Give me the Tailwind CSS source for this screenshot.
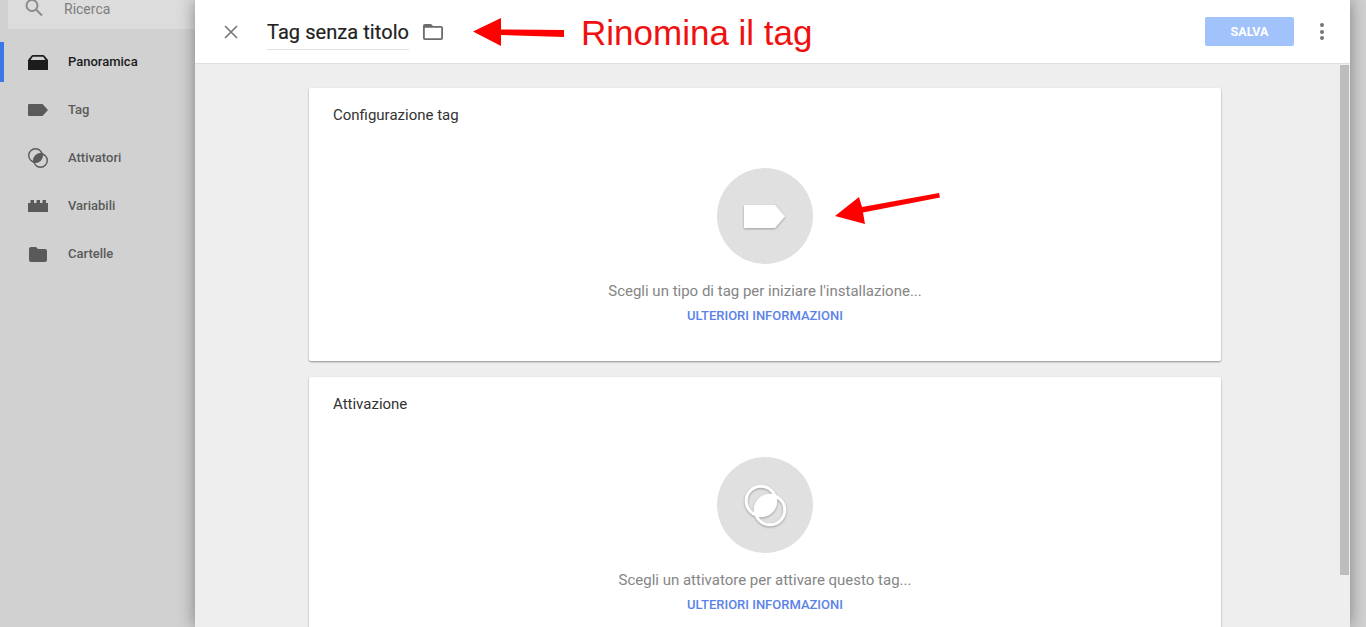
<!DOCTYPE html>
<html lang="en">
<head>
    <meta charset="UTF-8">
    <title>Tag senza titolo</title>
    <script src="https://cdn.jsdelivr.net/npm/@tailwindcss/browser@4"></script>
</head>
<body class="font-['Roboto',sans-serif] bg-[#d1d1d1] overflow-hidden">
<div class="relative flex h-[627px] w-[1366px] overflow-hidden">

    <!-- Sidebar -->
    <aside class="w-[195px] shrink-0 bg-[#d1d1d1]">
        <div class="ml-2 h-[29px] bg-[#dcdcdc] flex items-start">
            <svg class="ml-[16px] -mt-[2px]" width="20" height="20" viewBox="0 0 20 20" fill="none" stroke="#8c8c8c" stroke-width="2"><circle cx="8" cy="7.500" r="5.500"/><path d="M12 11.500l6 6"/></svg>
            <span class="ml-[20px] text-[14px] leading-[18px] text-[#7d7d7d]">Ricerca</span>
        </div>
        <nav class="mt-[13px]">
            <div class="relative flex items-center h-[40px] mb-[8px]">
                <div class="absolute left-0 top-0 h-[40px] w-[4px] bg-[#3b78e7]"></div>
                <svg class="ml-[28px]" width="20" height="15" viewBox="0 0 20 15" fill="#1c1c1c"><path d="M0 5L3.300 1Q4 0 5 0h10q1 0 1.700 1L20 5v10H0zM2.600 5h14.800l-2.200-3.200H4.800z" fill-rule="evenodd"/></svg>
                <span class="ml-[20px] text-[13px] font-medium text-[#1c1c1c]">Panoramica</span>
            </div>
            <div class="flex items-center h-[40px] mb-[8px]">
                <svg class="ml-[28px]" width="20" height="12" viewBox="0 0 20 12" fill="#5a5a5a"><path d="M1 0h13.500L20 6l-5.500 6H1q-1 0-1-1V1q0-1 1-1z"/></svg>
                <span class="ml-[20px] text-[13px] font-medium text-[#5a5a5a]">Tag</span>
            </div>
            <div class="flex items-center h-[40px] mb-[8px]">
                <svg class="ml-[28px]" width="20" height="20" viewBox="0 0 20 20" fill="none" stroke="#5a5a5a" stroke-width="1.400">
                    <clipPath id="navLens"><circle cx="7.500" cy="7.500" r="7"/></clipPath>
                    <circle cx="7.500" cy="7.500" r="6.800"/><circle cx="12.500" cy="12.500" r="6.800"/>
                    <circle cx="12.500" cy="12.500" r="6.800" fill="#5a5a5a" stroke="none" clip-path="url(#navLens)"/>
                </svg>
                <span class="ml-[20px] text-[13px] font-medium text-[#5a5a5a]">Attivatori</span>
            </div>
            <div class="flex items-center h-[40px] mb-[8px]">
                <svg class="ml-[28px]" width="20" height="12" viewBox="0 0 20 12" fill="#5a5a5a"><path d="M0 12V3h2.500V0h3.500v3h2.500V0h3.500v3h2.500V0h3.500v3H20v9z"/></svg>
                <span class="ml-[20px] text-[13px] font-medium text-[#5a5a5a]">Variabili</span>
            </div>
            <div class="flex items-center h-[40px]">
                <svg class="ml-[29px]" width="18" height="15" viewBox="0 0 18 15" fill="#5a5a5a"><path d="M2 0h5l2 2h7q2 0 2 2v9q0 2-2 2H2q-2 0-2-2V2q0-2 2-2z"/></svg>
                <span class="ml-[21px] text-[13px] font-medium text-[#5a5a5a]">Cartelle</span>
            </div>
        </nav>
    </aside>

    <!-- Tag editor panel -->
    <main class="relative w-[1155px] shrink-0 bg-[#eeeeee] shadow-[0_0_16px_rgba(0,0,0,0.4)] flex flex-col">
        <header class="h-[64px] shrink-0 bg-white border-b border-[#e0e0e0] flex items-center">
            <svg class="ml-[28px]" width="16" height="16" viewBox="0 0 16 16" stroke="#757575" stroke-width="1.600" fill="none"><path d="M2 2l12 12M14 2L2 14"/></svg>
            <div class="ml-[28px] w-[142px] h-[34px] border-b border-[#e0e0e0] text-[20px] leading-[32px] tracking-[0.06px] text-[#212121] whitespace-nowrap mt-[2px] [-webkit-text-stroke:0.2px_#212121]">Tag senza titolo</div>
            <svg class="ml-[14px]" width="20" height="16" viewBox="0 0 20 16" fill="none"><path d="M2 0h6l2 2h8q2 0 2 2v10q0 2-2 2H2q-2 0-2-2V2q0-2 2-2zM1.800 3.800V14.200h16.400V3.800z" fill="#6b6b6b" fill-rule="evenodd"/></svg>
            <button class="ml-auto w-[89px] h-[29px] pt-[1px] rounded-[2px] bg-[#a1c2fa] text-white text-[12.500px] font-bold">SALVA</button>
            <div class="ml-[26px] mr-[26px] flex flex-col gap-[2.500px]">
                <span class="w-[4px] h-[4px] rounded-full bg-[#757575]"></span>
                <span class="w-[4px] h-[4px] rounded-full bg-[#757575]"></span>
                <span class="w-[4px] h-[4px] rounded-full bg-[#757575]"></span>
            </div>
        </header>

        <div class="relative flex-1 overflow-hidden">
            <div class="absolute right-[1px] top-[1px] h-[510px] w-[9px] bg-[#bdbdbd]"></div>
            <div class="ml-[114px] w-[912px] pt-[24px] flex flex-col gap-[16px]">

                <section class="h-[273px] shrink-0 bg-white rounded-[2px] shadow-[0_1px_2px_rgba(0,0,0,0.4)] flex flex-col items-center">
                    <h2 class="self-start ml-[24px] mt-[18px] text-[15px] leading-[18px] text-[#333333]">Configurazione tag</h2>
                    <div class="mt-[44px] w-[96px] h-[96px] rounded-full bg-[#e0e0e0] flex items-center justify-center">
                        <svg class="overflow-visible drop-shadow-[0_1px_1px_rgba(0,0,0,0.3)] -ml-[1px]" width="41" height="23" viewBox="0 0 41 23" fill="#fff"><path d="M0 0h31l10 11.500L31 23H0z"/></svg>
                    </div>
                    <p class="mt-[18px] text-[15px] leading-[18px] text-[#858585]">Scegli un tipo di tag per iniziare l'installazione...</p>
                    <a class="mt-[8px] text-[13px] leading-[16px] font-medium text-[#5b82e8]">ULTERIORI INFORMAZIONI</a>
                </section>

                <section class="h-[273px] shrink-0 bg-white rounded-[2px] shadow-[0_1px_2px_rgba(0,0,0,0.4)] flex flex-col items-center">
                    <h2 class="self-start ml-[24px] mt-[18px] text-[15px] leading-[18px] text-[#333333]">Attivazione</h2>
                    <div class="mt-[44px] w-[96px] h-[96px] rounded-full bg-[#e0e0e0] flex items-center justify-center">
                        <svg class="overflow-visible drop-shadow-[0_1px_1px_rgba(0,0,0,0.3)]" width="41" height="41" viewBox="0 0 41 41" fill="none" stroke="#fff" stroke-width="3">
                            <clipPath id="bigLens"><circle cx="16" cy="16" r="15"/></clipPath>
                            <circle cx="16" cy="16" r="14.800"/><circle cx="25" cy="25" r="14.800"/>
                            <circle cx="25" cy="25" r="14.800" fill="#fff" stroke="none" clip-path="url(#bigLens)"/>
                        </svg>
                    </div>
                    <p class="mt-[18px] text-[15px] leading-[18px] text-[#858585]">Scegli un attivatore per attivare questo tag...</p>
                    <a class="mt-[8px] text-[13px] leading-[16px] font-medium text-[#5b82e8]">ULTERIORI INFORMAZIONI</a>
                </section>
            </div>
        </div>
    </main>

    <div class="flex-1 bg-[#d1d1d1]"></div>

    <!-- Annotations on top of the screenshot -->
    <svg class="absolute left-[472px] top-[18px]" width="94" height="28" viewBox="0 0 94 28" fill="#ff0000"><path d="M1 13.500L29 0v11.500l63 .5v7L29 17v11z"/></svg>
    <span class="absolute left-[581px] top-[13px] text-[35px] leading-[40px] font-['Liberation_Sans',sans-serif] text-[#f01010]">Rinomina il tag</span>
    <svg class="absolute left-[835px] top-[192px]" width="106" height="32" viewBox="0 0 106 32" fill="#ff0000"><path d="M0 24L24 5l3 10L104 1l1 4.500L28 20.500l2 11.500z"/></svg>
</div>
</body>
</html>
